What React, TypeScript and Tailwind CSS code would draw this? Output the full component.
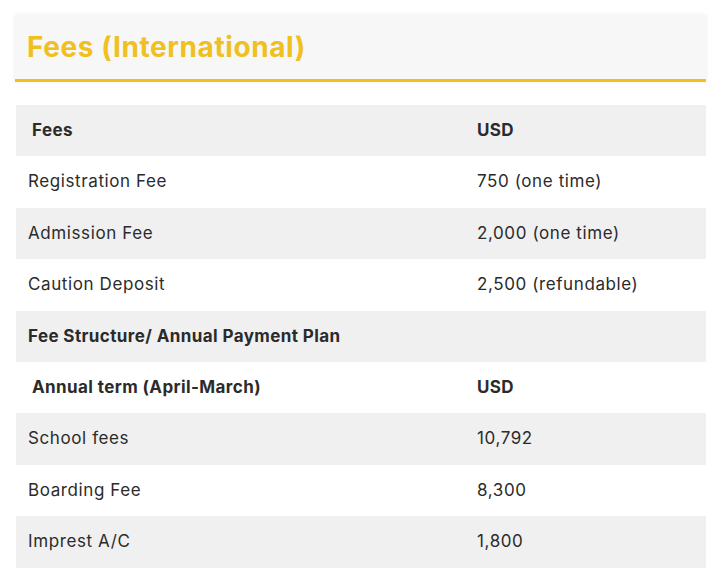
import React from 'react';

interface Row {
  label: string;
  value: string;
  bold?: boolean;
  indent?: boolean;
}

const rows: Row[] = [
  { label: 'Fees', value: 'USD', bold: true, indent: true },
  { label: 'Registration Fee', value: '750 (one time)' },
  { label: 'Admission Fee', value: '2,000 (one time)' },
  { label: 'Caution Deposit', value: '2,500 (refundable)' },
  { label: 'Fee Structure/ Annual Payment Plan', value: '', bold: true },
  { label: 'Annual term (April-March)', value: 'USD', bold: true, indent: true },
  { label: 'School fees', value: '10,792' },
  { label: 'Boarding Fee', value: '8,300' },
  { label: 'Imprest A/C', value: '1,800' },
];

export default function App() {
  return (
    <div className="w-[720px] h-[586px] bg-white pt-[15px] pl-[15px] pr-[14px] font-['Inter',sans-serif] text-[#2b2b2b]">
      <div className="bg-[#f7f7f7] h-[67px] border-b-[3px] border-[#efc01f] shadow-[0_0_4px_rgba(0,0,0,0.08)] flex items-center px-3">
        <h2 className="text-[28px] font-bold text-[#efc01f] leading-none tracking-[0.6px]">Fees (International)</h2>
      </div>
      <div className="mt-[23px] ml-px">
        {rows.map((r, i) => (
          <div
            key={i}
            className={`flex items-center h-[51.4px] text-[17px] ${i % 2 === 0 ? 'bg-[#f0f0f0]' : 'bg-white'} ${r.bold ? 'font-bold tracking-[0.4px]' : 'tracking-[0.6px]'}`}
          >
            <div className={`w-[449px] ${r.indent ? 'pl-4' : 'pl-3'}`}>{r.label}</div>
            <div className="pl-3">{r.value}</div>
          </div>
        ))}
      </div>
    </div>
  );
}
